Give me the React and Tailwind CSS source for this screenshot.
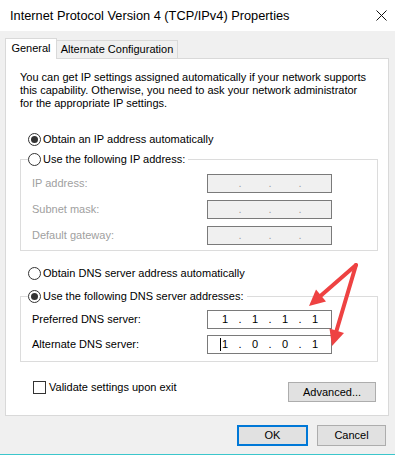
import React from "react";

const font = { fontFamily: '"Liberation Sans", Arial, sans-serif' };

function Radio({ checked }) {
  return (
    <span className="w-[13px] h-[13px] rounded-full border border-[#333333] bg-white flex items-center justify-center shrink-0">
      {checked && <span className="w-[7px] h-[7px] rounded-full bg-[#333333]" />}
    </span>
  );
}

function RadioRow({ checked, children }) {
  return (
    <div className="flex items-center gap-[2px] h-[16px]">
      <Radio checked={checked} />
      <span className="text-[11px] text-black leading-none">{children}</span>
    </div>
  );
}

function IpField({ parts, disabled, caret }) {
  const segs = parts || ["", "", "", ""];
  return (
    <div
      className={
        "w-[125px] h-[19px] border border-[#7a7a7a] flex items-center pl-[3px] text-[11px] leading-none " +
        (disabled ? "bg-[#f0f0f0] text-[#a0a0a0]" : "bg-white text-black")
      }
    >
      {segs.map((s, i) => (
        <React.Fragment key={i}>
          <span className="w-[28px] flex justify-center">
            <span className="relative">
              {s}
              {caret && i === 0 && <span className="absolute -left-[2px] -top-[1px] h-[13px] w-px bg-black" />}
            </span>
          </span>
          {i < 3 && <span className="w-[2px] flex justify-center">.</span>}
        </React.Fragment>
      ))}
    </div>
  );
}

function FieldRow({ label, disabled, parts, caret }) {
  return (
    <div className="flex items-center pl-[4px]">
      <span className={"w-[175px] text-[11px] " + (disabled ? "text-[#a0a0a0]" : "text-black")}>{label}</span>
      <IpField parts={parts} disabled={disabled} caret={caret} />
    </div>
  );
}

function Button({ children, primary, className }) {
  return (
    <div
      className={
        "h-[21px] flex items-center justify-center bg-[#e1e1e1] text-[11px] text-black " +
        (primary ? "border-2 border-[#0078d7] " : "border border-[#adadad] ") +
        (className || "")
      }
    >
      {children}
    </div>
  );
}

export default function App() {
  return (
    <div className="relative w-[395px] h-[455px] bg-[#f0f0f0] flex flex-col overflow-hidden" style={font}>
      {/* Title bar */}
      <div className="h-[31px] bg-white flex items-center justify-between pl-[10px] pr-[8px]">
        <span className="text-[12.8px] text-black">Internet Protocol Version 4 (TCP/IPv4) Properties</span>
        <svg width="11" height="11" viewBox="0 0 11 11" className="mt-[-1px]">
          <path d="M0.5 0.5 L10.5 10.5 M10.5 0.5 L0.5 10.5" stroke="#111" strokeWidth="1" />
        </svg>
      </div>

      <div className="pl-[5px] pr-[6px] flex flex-col">
        {/* Tabs */}
        <div className="flex items-end mt-[7px]">
          <div className="relative z-10 w-[52px] h-[21px] -mb-px bg-white border-l border-t border-r border-[#d9d9d9] flex items-center justify-center text-[11px] text-black pb-[1px]">
            General
          </div>
          <div className="w-[121px] h-[18px] bg-[#f0f0f0] border-t border-r border-[#d9d9d9] flex items-center justify-center text-[11px] text-black">
            Alternate Configuration
          </div>
        </div>

        {/* Panel */}
        <div className="bg-white border border-[#d9d9d9] pl-[14px] pr-[10px] pb-[13px] flex flex-col">
          <p className="mt-[12px] text-[11px] leading-[13px] text-black">
            You can get IP settings assigned automatically if your network supports
            <br />
            this capability. Otherwise, you need to ask your network administrator
            <br />
            for the appropriate IP settings.
          </p>

          <div className="mt-[21px] pl-[8px]">
            <RadioRow checked>Obtain an IP address automatically</RadioRow>
          </div>

          <fieldset className="mt-[4px] border border-[#dcdcdc] pl-[7px] pb-[5px]">
            <legend className="pr-[3px]">
              <RadioRow>Use the following IP address:</RadioRow>
            </legend>
            <div className="mt-[7px] flex flex-col gap-[7px]">
              <FieldRow label="IP address:" disabled />
              <FieldRow label="Subnet mask:" disabled />
              <FieldRow label="Default gateway:" disabled />
            </div>
          </fieldset>

          <div className="mt-[14px] pl-[8px]">
            <RadioRow>Obtain DNS server address automatically</RadioRow>
          </div>

          <fieldset className="mt-[7px] border border-[#dcdcdc] pl-[7px] pb-[7px]">
            <legend className="pr-[3px]">
              <RadioRow checked>Use the following DNS server addresses:</RadioRow>
            </legend>
            <div className="mt-[6px] flex flex-col gap-[6px]">
              <FieldRow label="Preferred DNS server:" parts={["1", "1", "1", "1"]} />
              <FieldRow label="Alternate DNS server:" parts={["1", "0", "0", "1"]} caret />
            </div>
          </fieldset>

          <div className="mt-[18px] flex items-start justify-between">
            <div className="flex items-center gap-[3px] pl-[13px] mt-[1px]">
              <span className="w-[13px] h-[13px] border border-[#333333] bg-white shrink-0" />
              <span className="text-[11px] text-black leading-none">Validate settings upon exit</span>
            </div>
            <Button className="mt-[2px] mr-[2px] w-[88px] !h-[20px]">Advanced...</Button>
          </div>
        </div>

        {/* Footer buttons */}
        <div className="mt-[9px] flex justify-end gap-[9px] pr-[3px]">
          <Button primary className="w-[71px]">OK</Button>
          <Button className="w-[69px]">Cancel</Button>
        </div>
      </div>

      <div className="mt-auto h-px bg-[#3cc6cc]" />

      {/* Red annotation arrows */}
      <svg className="absolute left-0 top-0 pointer-events-none" width="395" height="455" viewBox="0 0 395 455">
        <g stroke="#ee4242" strokeWidth="4" strokeLinecap="round" fill="#ee4242">
          <line x1="356" y1="265" x2="321" y2="295.5" />
          <line x1="356" y1="265" x2="336.5" y2="330.7" />
        </g>
        <polygon points="309,306 326,301.5 316,289.5" fill="#ee4242" />
        <polygon points="332,346 344,333 329.5,328.5" fill="#ee4242" />
      </svg>
    </div>
  );
}
